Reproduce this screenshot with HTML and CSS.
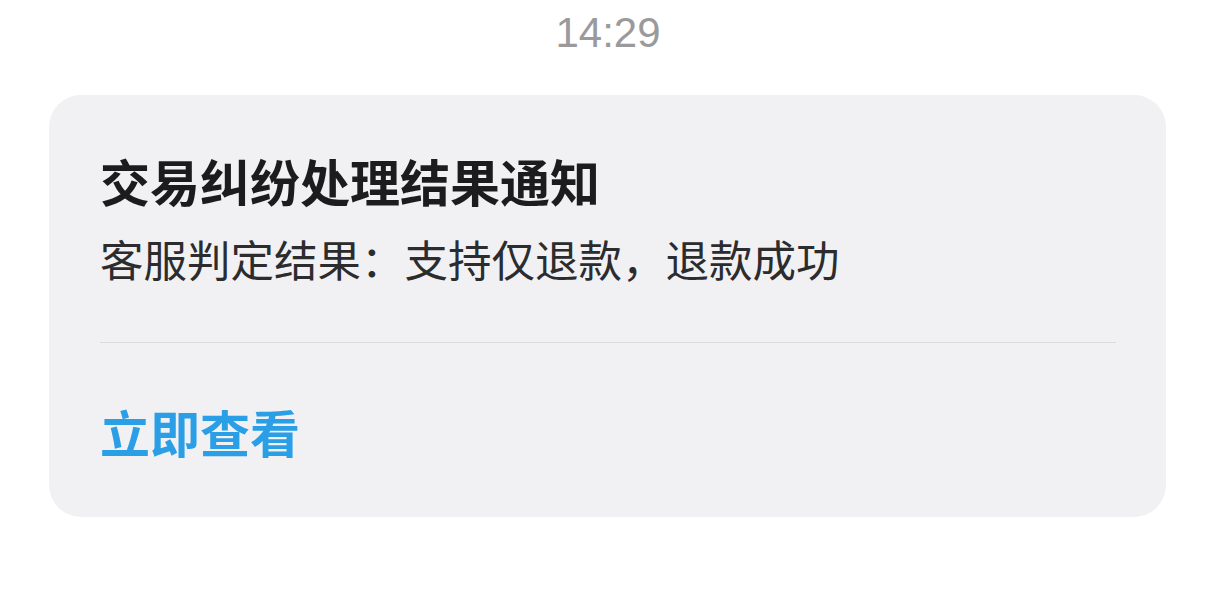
FILE: index.html
```html
<!DOCTYPE html>
<html lang="zh-CN">
<head>
<meta charset="utf-8">
<title>交易纠纷处理结果通知</title>
<link rel="stylesheet" href="styles.css">
</head>
<body>
  <div class="time">14:29</div>
  <div class="card">
    <div class="title">交易纠纷处理结果通知</div>
    <div class="desc">客服判定结果：支持仅退款，退款成功</div>
    <div class="divider"></div>
    <div class="link">立即查看</div>
  </div>
</body>
</html>
```

FILE: styles.css
```css
html, body {
  margin: 0;
  padding: 0;
  background: #ffffff;
}
body {
  font-family: "Noto Sans CJK SC", "Noto Sans", sans-serif;
  width: 1216px;
  height: 600px;
  overflow: hidden;
}
.time {
  margin-top: 8px;
  height: 50px;
  line-height: 50px;
  text-align: center;
  font-family: "Liberation Sans", Arial, sans-serif;
  font-size: 42px;
  color: #9a9a9c;
}
.card {
  margin: 37px 50px 0 49px;
  height: 422px;
  box-sizing: border-box;
  background: #f1f1f3;
  border-radius: 32px;
  padding: 55px 50px 0 51px;
}
.title {
  font-size: 50px;
  line-height: 60px;
  font-weight: 700;
  color: #1c1c1e;
}
.desc {
  margin-top: 23px;
  font-size: 43.5px;
  line-height: 52px;
  color: #2c2c2e;
}
.divider {
  margin-top: 57px;
  height: 1px;
  background: #dcdcdf;
}
.link {
  margin-top: 58px;
  font-size: 50px;
  line-height: 60px;
  font-weight: 700;
  color: #2b9fe6;
}
```
